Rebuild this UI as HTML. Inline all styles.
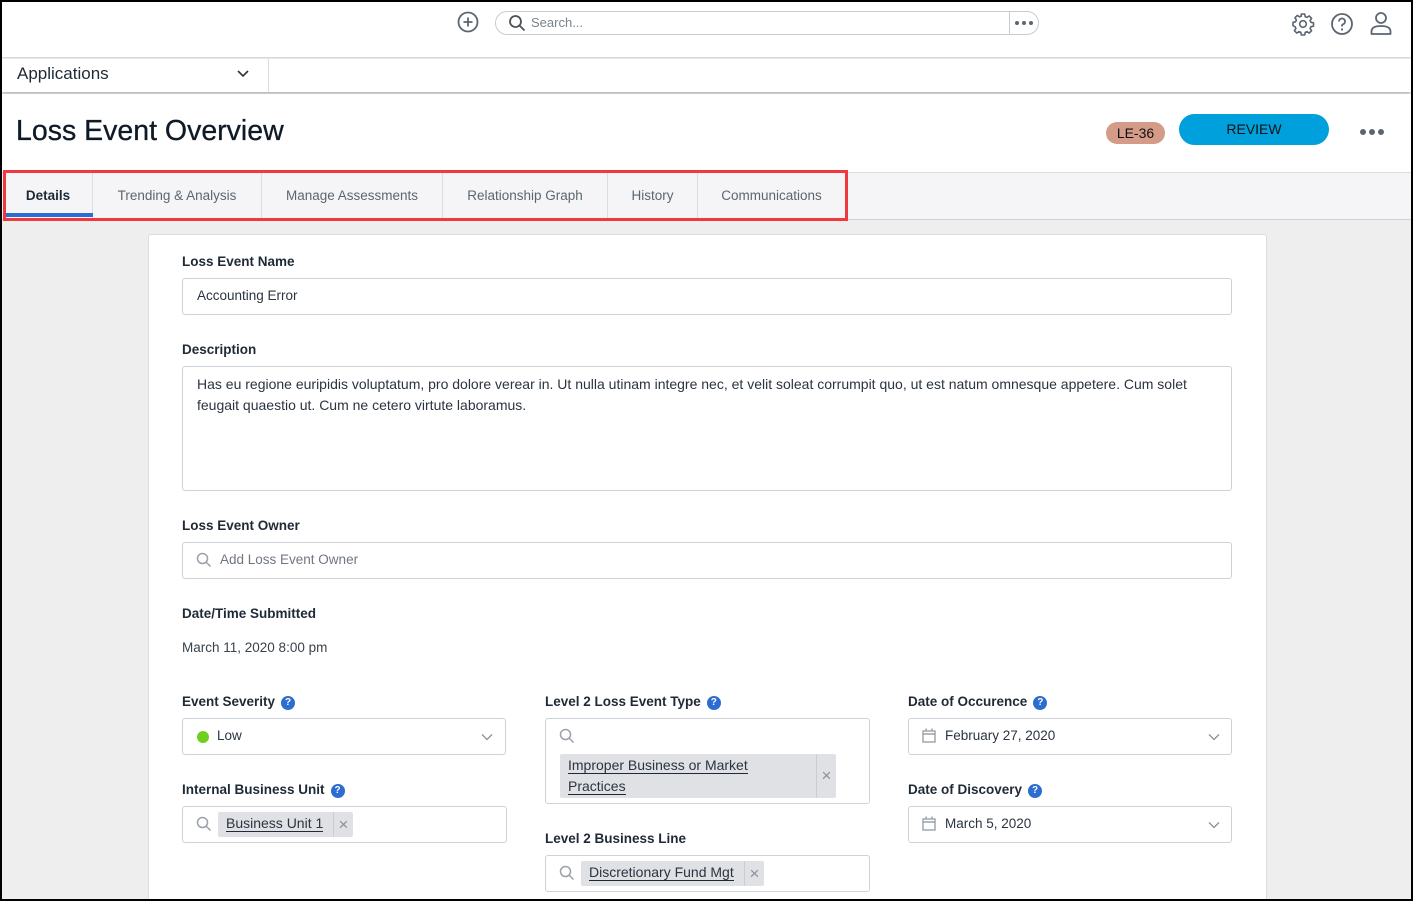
<!DOCTYPE html>
<html><head><meta charset="utf-8"><style>
*{box-sizing:border-box;margin:0;padding:0}
body{width:1413px;height:901px;overflow:hidden;background:#000;font-family:"Liberation Sans",sans-serif;color:#1f2a36;position:relative}
#wrap{position:absolute;left:2px;top:2px;width:1409px;height:897px;background:#eeeeee;overflow:hidden}
.a{position:absolute}
.lbl{position:absolute;font-size:13.5px;font-weight:bold;color:#1f2a36}
.inp{position:absolute;background:#fff;border:1px solid #cfd2d6;border-radius:3px;font-size:13.5px;color:#2b3440}
.help{display:inline-block;width:14px;height:14px;border-radius:50%;background:#2d6cd0;color:#fff;font-size:10px;font-weight:bold;text-align:center;line-height:14px;vertical-align:1px;margin-left:6px}
.tab{position:absolute;top:170px;height:48px;line-height:48px;font-size:13.5px;color:#5c6670;text-align:center;border-right:1px solid #dcdde0}
.chip{position:absolute;background:#dfe1e4;border-radius:2px;font-size:13.5px;color:#2b3440}
.chip u{text-decoration:none;border-bottom:1px solid #1f2a36}
.x{position:absolute;top:0;bottom:0;width:20px;border-left:1px solid #c9ccd0;color:#8a9099;text-align:center;font-size:17px}
.dots{position:absolute;display:flex;gap:3px}
.dots i{display:block;border-radius:50%;background:#5b6670}
</style></head><body><div id="wrap">
<!-- header -->
<div class="a" style="left:0;top:0;width:1409px;height:56px;background:#fff;border-bottom:1px solid #dcdde0"></div>
<svg class="a" style="left:455px;top:9px" width="22" height="22" viewBox="0 0 22 22"><circle cx="11" cy="11" r="9.5" fill="none" stroke="#5b6670" stroke-width="1.8"/><path d="M11 6.5v9M6.5 11h9" stroke="#5b6670" stroke-width="1.8"/></svg>
<div class="a" style="left:493px;top:9px;width:544px;height:24px;border:1px solid #c9ccd0;border-radius:12px;background:#fff"></div>
<div class="a" style="left:1007px;top:10px;width:1px;height:22px;background:#c9ccd0"></div>
<svg class="a" style="left:506px;top:12px" width="18" height="18" viewBox="0 0 18 18"><circle cx="7.5" cy="7.5" r="5.5" fill="none" stroke="#4a535c" stroke-width="1.8"/><path d="M11.5 11.5l5 5" stroke="#4a535c" stroke-width="1.8"/></svg>
<div class="a" style="left:529px;top:13px;font-size:13px;color:#7a838c">Search...</div>
<div class="dots" style="left:1013px;top:19px"><i style="width:4px;height:4px"></i><i style="width:4px;height:4px"></i><i style="width:4px;height:4px"></i></div>
<svg class="a" style="left:1289px;top:10px" width="24" height="24" viewBox="0 0 24 24"><path d="M10.3 2h3.4l.5 2.6 1.8.8 2.2-1.5 2.4 2.4-1.5 2.2.8 1.8 2.6.5v3.4l-2.6.5-.8 1.8 1.5 2.2-2.4 2.4-2.2-1.5-1.8.8-.5 2.6h-3.4l-.5-2.6-1.8-.8-2.2 1.5-2.4-2.4 1.5-2.2-.8-1.8L2 13.7v-3.4l2.6-.5.8-1.8-1.5-2.2 2.4-2.4 2.2 1.5 1.8-.8z" fill="none" stroke="#5b6670" stroke-width="1.6" stroke-linejoin="round"/><circle cx="12" cy="12" r="3.3" fill="none" stroke="#5b6670" stroke-width="1.6"/></svg>
<svg class="a" style="left:1328px;top:10px" width="24" height="24" viewBox="0 0 24 24"><circle cx="12" cy="12" r="10" fill="none" stroke="#5b6670" stroke-width="1.8"/><path d="M9 9.5a3 3 0 1 1 4 2.8c-.7.3-1 .8-1 1.6v.6" fill="none" stroke="#5b6670" stroke-width="1.8"/><circle cx="12" cy="17.5" r="1.1" fill="#5b6670"/></svg>
<svg class="a" style="left:1367px;top:9px" width="24" height="25" viewBox="0 0 24 25"><circle cx="12" cy="7" r="5" fill="none" stroke="#5b6670" stroke-width="1.8"/><path d="M2.5 23v-2.5c0-3.5 3-5.5 9.5-5.5s9.5 2 9.5 5.5V23z" fill="none" stroke="#5b6670" stroke-width="1.8" stroke-linejoin="round"/></svg>
<!-- apps bar -->
<div class="a" style="left:0;top:57px;width:1409px;height:33px;background:#fff;box-shadow:0 2px 4px rgba(0,0,0,.25)"></div>
<div class="a" style="left:266px;top:57px;width:1px;height:33px;background:#dcdde0"></div>
<div class="a" style="left:15px;top:62px;font-size:17px;color:#1f2a36">Applications</div>
<svg class="a" style="left:234px;top:67px" width="14" height="10" viewBox="0 0 14 10"><path d="M2 2l5 5 5-5" fill="none" stroke="#333" stroke-width="1.6"/></svg>
<!-- title -->
<div class="a" style="left:0;top:92px;width:1409px;height:78px;background:#fff"></div>
<div class="a" style="left:14px;top:113px;font-size:28.5px;color:#0f1a26;-webkit-text-stroke:0.3px #0f1a26">Loss Event Overview</div>
<div class="a" style="left:1104px;top:120px;width:59px;height:22px;border-radius:11px;background:#d49c88;font-size:14px;text-align:center;line-height:22px;color:#111">LE-36</div>
<div class="a" style="left:1177px;top:112px;width:150px;height:31px;border-radius:16px;background:#00a0dd;font-size:14px;text-align:center;line-height:31px;color:#111">REVIEW</div>
<div class="dots" style="left:1358px;top:127px"><i style="width:6px;height:6px"></i><i style="width:6px;height:6px"></i><i style="width:6px;height:6px"></i></div>
<!-- tabs -->
<div class="a" style="left:0;top:170px;width:1409px;height:48px;background:#f5f5f7;border-top:1px solid #dcdde0;border-bottom:1px solid #cfd0d3"></div>
<div class="tab" style="left:2px;width:89px;color:#1f2a36;font-weight:bold;background:#f5f5f7">Details</div>
<div class="a" style="left:3px;top:211px;width:88px;height:4px;background:#2d6cd0"></div>
<div class="tab" style="left:91px;width:169px">Trending &amp; Analysis</div>
<div class="tab" style="left:260px;width:181px">Manage Assessments</div>
<div class="tab" style="left:441px;width:165px">Relationship Graph</div>
<div class="tab" style="left:606px;width:90px">History</div>
<div class="tab" style="left:696px;width:147px;border-right:none">Communications</div>
<div class="a" style="left:1px;top:168px;width:845px;height:51px;border:3px solid #f0393f"></div>
<!-- card -->
<div class="a" style="left:146px;top:232px;width:1119px;height:700px;background:#fff;border:1px solid #dcdde0;border-radius:3px"></div>
<div class="lbl" style="left:180px;top:252px">Loss Event Name</div>
<div class="inp" style="left:180px;top:276px;width:1050px;height:37px;padding:9px 14px">Accounting Error</div>
<div class="lbl" style="left:180px;top:340px">Description</div>
<div class="inp" style="left:180px;top:364px;width:1050px;height:125px;padding:7px 14px;line-height:21px;font-size:14px">Has eu regione euripidis voluptatum, pro dolore verear in. Ut nulla utinam integre nec, et velit soleat corrumpit quo, ut est natum omnesque appetere. Cum solet feugait quaestio ut. Cum ne cetero virtute laboramus.</div>
<div class="lbl" style="left:180px;top:516px">Loss Event Owner</div>
<div class="inp" style="left:180px;top:540px;width:1050px;height:37px;padding:9px 14px 9px 37px;color:#6f7780">Add Loss Event Owner</div>
<svg class="a" style="left:194px;top:550px" width="16" height="16" viewBox="0 0 16 16"><circle cx="6.5" cy="6.5" r="5" fill="none" stroke="#9aa1a8" stroke-width="1.5"/><path d="M10 10l4.5 4.5" stroke="#9aa1a8" stroke-width="1.5"/></svg>
<div class="lbl" style="left:180px;top:604px">Date/Time Submitted</div>
<div class="a" style="left:180px;top:638px;font-size:13.5px;color:#3a434c">March 11, 2020 8:00 pm</div>
<!-- col 1 -->
<div class="lbl" style="left:180px;top:692px">Event Severity<span class="help">?</span></div>
<div class="inp" style="left:180px;top:716px;width:324px;height:37px;padding:9px 14px 9px 34px">Low</div>
<div class="a" style="left:195px;top:729px;width:12px;height:12px;border-radius:50%;background:#6fcf1f"></div>
<svg class="a" style="left:479px;top:731px" width="12" height="8" viewBox="0 0 12 8"><path d="M1 1.5l5 5 5-5" fill="none" stroke="#8a9099" stroke-width="1.3"/></svg>
<div class="lbl" style="left:180px;top:780px">Internal Business Unit<span class="help">?</span></div>
<div class="inp" style="left:180px;top:804px;width:325px;height:37px"></div>
<svg class="a" style="left:194px;top:814px" width="16" height="16" viewBox="0 0 16 16"><circle cx="6.5" cy="6.5" r="5" fill="none" stroke="#9aa1a8" stroke-width="1.5"/><path d="M10 10l4.5 4.5" stroke="#9aa1a8" stroke-width="1.5"/></svg>
<div class="chip" style="left:216px;top:810px;width:135px;height:25px;padding:3px 8px;font-size:14px"><u>Business Unit 1</u><div class="x" style="right:0;line-height:25px">×</div></div>
<!-- col 2 -->
<div class="lbl" style="left:543px;top:692px">Level 2 Loss Event Type<span class="help">?</span></div>
<div class="inp" style="left:543px;top:716px;width:325px;height:86px"></div>
<svg class="a" style="left:557px;top:726px" width="16" height="16" viewBox="0 0 16 16"><circle cx="6.5" cy="6.5" r="5" fill="none" stroke="#9aa1a8" stroke-width="1.5"/><path d="M10 10l4.5 4.5" stroke="#9aa1a8" stroke-width="1.5"/></svg>
<div class="chip" style="left:558px;top:752px;width:276px;height:44px;padding:1px 8px;line-height:21px;font-size:14px"><u>Improper Business or Market</u><br><u>Practices</u><div class="x" style="right:0;line-height:44px">×</div></div>
<div class="lbl" style="left:543px;top:829px">Level 2 Business Line</div>
<div class="inp" style="left:543px;top:853px;width:325px;height:37px"></div>
<svg class="a" style="left:557px;top:863px" width="16" height="16" viewBox="0 0 16 16"><circle cx="6.5" cy="6.5" r="5" fill="none" stroke="#9aa1a8" stroke-width="1.5"/><path d="M10 10l4.5 4.5" stroke="#9aa1a8" stroke-width="1.5"/></svg>
<div class="chip" style="left:579px;top:859px;width:183px;height:25px;padding:3px 8px;font-size:14px"><u>Discretionary Fund Mgt</u><div class="x" style="right:0;line-height:25px">×</div></div>
<!-- col 3 -->
<div class="lbl" style="left:906px;top:692px">Date of Occurence<span class="help">?</span></div>
<div class="inp" style="left:906px;top:716px;width:324px;height:37px;padding:9px 14px 9px 36px">February 27, 2020</div>
<svg class="a" style="left:920px;top:726px" width="14" height="15" viewBox="0 0 14 15"><rect x="1" y="3" width="12" height="11" fill="none" stroke="#9aa1a8" stroke-width="1.4"/><path d="M1 6h12M4 0.5v3M10 0.5v3" stroke="#9aa1a8" stroke-width="1.4"/></svg>
<svg class="a" style="left:1206px;top:731px" width="12" height="8" viewBox="0 0 12 8"><path d="M1 1.5l5 5 5-5" fill="none" stroke="#8a9099" stroke-width="1.3"/></svg>
<div class="lbl" style="left:906px;top:780px">Date of Discovery<span class="help">?</span></div>
<div class="inp" style="left:906px;top:804px;width:324px;height:37px;padding:9px 14px 9px 36px">March 5, 2020</div>
<svg class="a" style="left:920px;top:814px" width="14" height="15" viewBox="0 0 14 15"><rect x="1" y="3" width="12" height="11" fill="none" stroke="#9aa1a8" stroke-width="1.4"/><path d="M1 6h12M4 0.5v3M10 0.5v3" stroke="#9aa1a8" stroke-width="1.4"/></svg>
<svg class="a" style="left:1206px;top:819px" width="12" height="8" viewBox="0 0 12 8"><path d="M1 1.5l5 5 5-5" fill="none" stroke="#8a9099" stroke-width="1.3"/></svg>
</div></body></html>
